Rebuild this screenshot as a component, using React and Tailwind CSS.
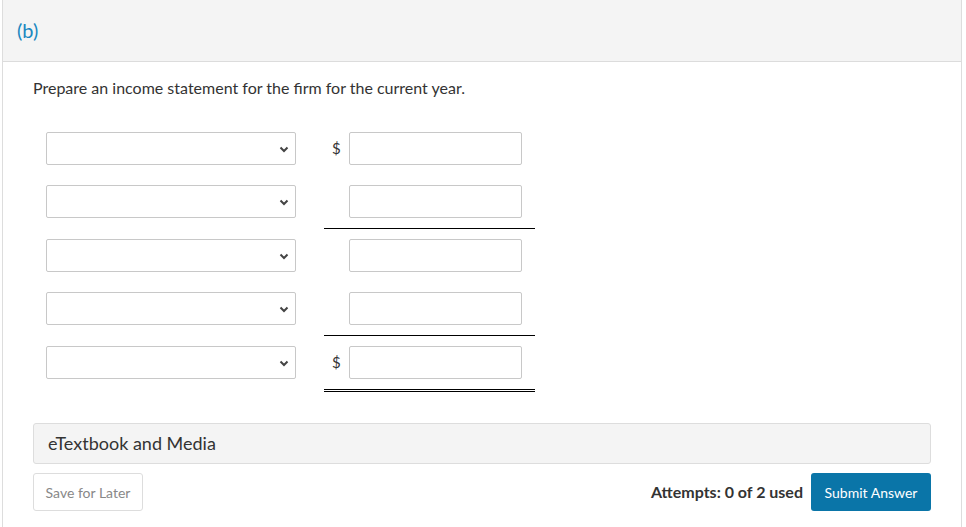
import React from "react";

function Chevron() {
  return (
    <svg width="10" height="7" viewBox="0 0 10 7" className="absolute right-[6px] top-[13px]">
      <path d="M1.5 1.5 L5 5 L8.5 1.5" fill="none" stroke="#444" strokeWidth="2" />
    </svg>
  );
}

function Sel() {
  return (
    <div className="relative w-[250px] h-[33px] border border-[#c8c8c8] rounded-[2px] bg-white">
      <Chevron />
    </div>
  );
}

function Row({ dollar, border }) {
  const b =
    border === "single"
      ? "border-b border-black"
      : border === "double"
      ? "border-b-[3px] border-double border-black"
      : "";
  return (
    <div className="flex">
      <div className="w-[291px] pl-[13px] py-[10px]">
        <Sel />
      </div>
      <div className={`w-[211px] flex items-center pl-[8px] py-[10px] ${b}`}>
        <span className="w-[17px] text-[15px] text-[#333]">{dollar ? "$" : ""}</span>
        <div className="w-[173px] h-[33px] border border-[#c8c8c8] rounded-[2px] bg-white" />
      </div>
    </div>
  );
}

export default function App() {
  return (
    <div className="w-[966px] h-[527px] bg-white overflow-hidden" style={{ fontFamily: "Lato, 'Open Sans', sans-serif" }}>
      <div className="ml-[2px] w-[960px] h-[527px] border-l border-r border-[#dddddd]">
        <div className="h-[62px] bg-[#f4f4f4] border-b border-[#dcdcdc] pl-[14px] pt-[15px]">
          <span className="text-[20px] text-[#1b88c0]">(b)</span>
        </div>
        <div className="px-[30px]">
          <p className="mt-[15px] text-[16px] text-[#333] leading-[22px]">Prepare an income statement for the firm for the current year.</p>
          <div className="mt-[23px]">
            <Row dollar border="" />
            <Row border="single" />
            <Row border="" />
            <Row border="single" />
            <Row dollar border="double" />
          </div>
          <div className="mt-[31px] w-[898px] h-[41px] bg-[#f4f4f4] border border-[#dddddd] rounded-[3px] flex items-center pl-[14px]">
            <span className="text-[18px] text-[#333]">eTextbook and Media</span>
          </div>
          <div className="mt-[9px] w-[898px] flex items-center justify-between">
            <div className="w-[110px] h-[38px] border border-[#dddddd] rounded-[3px] flex items-center justify-center text-[14px] text-[#888]">
              Save for Later
            </div>
            <div className="flex items-center">
              <span className="text-[16px] font-bold text-[#333] mr-[8px]">Attempts: 0 of 2 used</span>
              <div className="w-[120px] h-[38px] bg-[#0a75a8] rounded-[3px] flex items-center justify-center text-[14px] text-white">
                Submit Answer
              </div>
            </div>
          </div>
        </div>
      </div>
    </div>
  );
}
